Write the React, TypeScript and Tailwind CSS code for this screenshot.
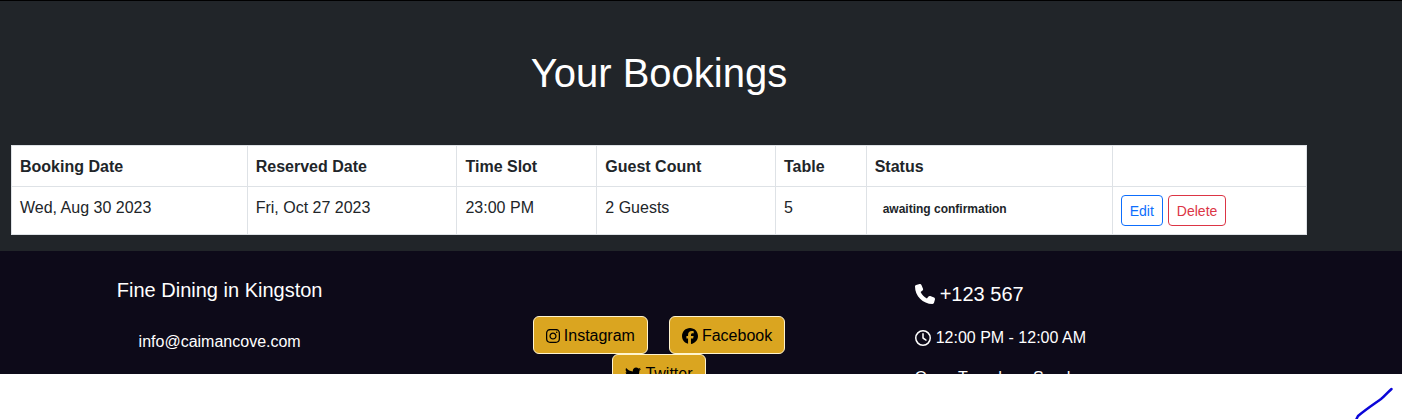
import React from "react";
import { FaInstagram, FaFacebook, FaTwitter, FaPhone, FaRegClock } from "react-icons/fa6";

const columns = [
  { label: "Booking Date", width: "w-[18.2%]" },
  { label: "Reserved Date", width: "w-[16.2%]" },
  { label: "Time Slot", width: "w-[10.8%]" },
  { label: "Guest Count", width: "w-[13.8%]" },
  { label: "Table", width: "w-[7%]" },
  { label: "Status", width: "w-[19%]" },
  { label: "", width: "w-[15%]" },
];

const bookings = [
  {
    booked: "Wed, Aug 30 2023",
    reserved: "Fri, Oct 27 2023",
    slot: "23:00 PM",
    guests: "2 Guests",
    table: "5",
    status: "awaiting confirmation",
  },
];

const cell = "border border-[#dee2e6] px-2 pt-[9px] pb-[7px] align-top";
const actionButton = "rounded border px-2 pt-[5px] pb-[3px] text-sm leading-[21px]";

function SocialLink({ icon, label }: { icon: React.ReactNode; label: string }) {
  return (
    <a
      href="#"
      className="flex items-center gap-1 rounded-md border border-[#fff4cf] bg-[#daa520] px-3 pt-[7px] pb-[5px] text-base leading-6 text-black"
    >
      {icon}
      <span>{label}</span>
    </a>
  );
}

export default function App() {
  return (
    <div className="min-h-screen bg-white font-['Liberation_Sans',Arial,sans-serif] text-base text-[#212529]">
      <main className="border-t border-black bg-[#212529] pb-4 pl-[11px] pr-[95px] pt-12">
        <h1 className="mb-12 text-center text-[40px] leading-[48px] text-white">Your Bookings</h1>
        <table className="w-full table-fixed border-collapse bg-white text-left">
          <thead>
            <tr>
              {columns.map((column) => (
                <th key={column.label} scope="col" className={`${cell} ${column.width} font-bold`}>
                  {column.label}
                </th>
              ))}
            </tr>
          </thead>
          <tbody>
            {bookings.map((booking) => (
              <tr key={booking.booked}>
                <td className={cell}>{booking.booked}</td>
                <td className={cell}>{booking.reserved}</td>
                <td className={cell}>{booking.slot}</td>
                <td className={cell}>{booking.guests}</td>
                <td className={cell}>{booking.table}</td>
                <td className={cell}>
                  <span className="block px-2 py-[5px] text-xs font-bold">{booking.status}</span>
                </td>
                <td className="border border-[#dee2e6] p-2 align-top">
                  <div className="flex gap-[5px]">
                    <button type="button" className={`${actionButton} border-[#0d6efd] text-[#0d6efd]`}>
                      Edit
                    </button>
                    <button type="button" className={`${actionButton} border-[#dc3545] text-[#dc3545]`}>
                      Delete
                    </button>
                  </div>
                </td>
              </tr>
            ))}
          </tbody>
        </table>
      </main>

      <footer className="h-[123px] overflow-hidden bg-[#0d0a19] pr-[84px] text-white">
        <div className="grid grid-cols-3">
          <div className="pt-[27px] text-center">
            <h2 className="text-xl leading-6">Fine Dining in Kingston</h2>
            <a href="mailto:info@caimancove.com" className="mt-7 inline-block leading-6">
              info@caimancove.com
            </a>
          </div>
          <div className="flex flex-wrap content-start justify-center gap-x-[21px] px-20 pt-[65px]">
            <SocialLink icon={<FaInstagram className="h-4 w-[14px]" />} label="Instagram" />
            <SocialLink icon={<FaFacebook />} label="Facebook" />
            <SocialLink icon={<FaTwitter />} label="Twitter" />
          </div>
          <div className="pl-9 pt-[31px]">
            <p className="flex items-center gap-[5px] text-xl leading-6">
              <FaPhone />
              <span>+123 567</span>
            </p>
            <p className="mt-5 flex items-center gap-[5px] leading-6">
              <FaRegClock />
              <span>12:00 PM - 12:00 AM</span>
            </p>
            <p className="mt-4 leading-6">Open Tuesday - Sunday</p>
          </div>
        </div>
      </footer>

      <div className="flex h-[45px] justify-end overflow-hidden pr-2">
        <svg width="42" height="45" viewBox="0 0 42 45" fill="none" aria-hidden="true">
          <path
            d="M4 46L6 42C13 36 22 30 29 25C33 22 36 18 39.5 15"
            stroke="#0b06d8"
            strokeWidth="2.5"
            strokeLinecap="round"
          />
        </svg>
      </div>
    </div>
  );
}
